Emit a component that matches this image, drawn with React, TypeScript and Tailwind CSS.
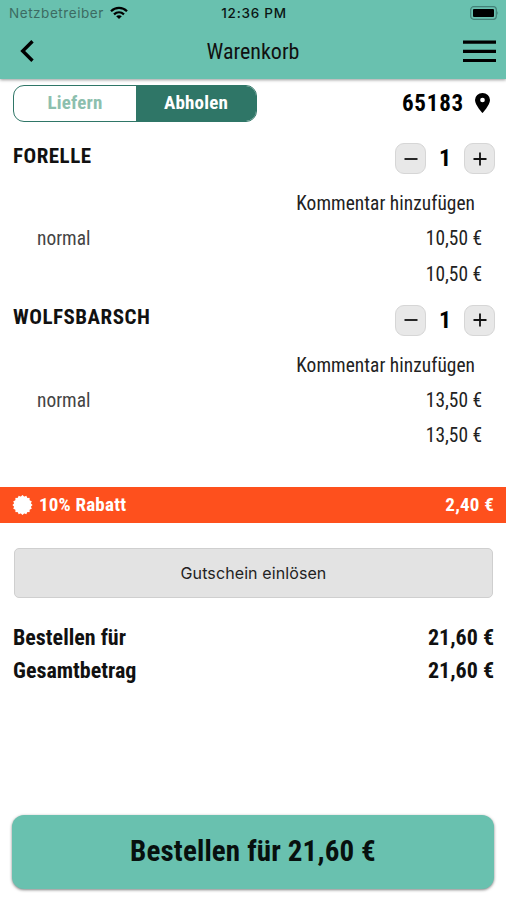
import React from "react";

const items = [
  { name: "FORELLE", price: "10,50 €" },
  { name: "WOLFSBARSCH", price: "13,50 €" },
];

function StepButton({ plus }: { plus?: boolean }) {
  return (
    <button className="flex h-[31px] w-[31px] items-center justify-center rounded-[9px] border border-[#d6d6d6] bg-[#e8e8e8]">
      <svg width="14" height="14" viewBox="0 0 14 14" stroke="#111" strokeWidth="1.8">
        <path d={plus ? "M0.5 7H13.5M7 0.5V13.5" : "M0.5 7H13.5"} />
      </svg>
    </button>
  );
}

function Item({ name, price }: { name: string; price: string }) {
  return (
    <section className="h-[161.5px] pl-[13px] text-[19.4px] text-[#222]">
      <div className="flex h-[44px] items-start justify-between pr-[11px]">
        <h2 className="mt-[0.9px] text-[21px] leading-[24px] font-bold tracking-[0.5px] text-[#111]">{name}</h2>
        <div className="flex items-center">
          <StepButton />
          <span className="w-[38px] text-center text-[24px] leading-[31px] font-bold text-black">1</span>
          <StepButton plus />
        </div>
      </div>
      <div className="flex h-[34px] items-center justify-end pr-[31px] tracking-[0.05px]">Kommentar hinzufügen</div>
      <div className="flex h-[36px] items-center justify-between pr-[24px] pl-[24px]">
        <span className="text-[#444]">normal</span>
        <span>{price}</span>
      </div>
      <div className="flex h-[35px] items-center justify-end pr-[24px]">{price}</div>
    </section>
  );
}

export default function App() {
  return (
    <main className="flex h-[900px] w-[506px] flex-col overflow-hidden bg-white font-['Roboto_Condensed','Roboto',sans-serif] [font-stretch:75%]">
      <header className="h-[79px] shrink-0 bg-[#69c1af] shadow-[0_1px_3px_rgba(0,0,0,0.4)]">
        <div className="grid h-[26px] grid-cols-3 items-center pr-[7px] pl-[9px] font-['Inter',sans-serif] text-[13.5px] [font-stretch:100%]">
          <div className="flex items-center gap-[6px] tracking-[0.55px] text-[#3c6b62]">
            <span className="pt-[1px]">Netzbetreiber</span>
            <svg width="18" height="14" viewBox="0 0 18 14" fill="none" stroke="#000" strokeWidth="2.2">
              <path d="M1 5.2C5.5 0.7 12.5 0.7 17 5.2" />
              <path d="M4 8.4C7 5.6 11 5.6 14 8.4" />
              <path d="M9 13L6.2 10.2C7.8 8.8 10.2 8.8 11.8 10.2Z" fill="#000" stroke="none" />
            </svg>
          </div>
          <span className="pt-[1px] text-center font-medium tracking-[0.75px] text-[#0b1614]">12:36 PM</span>
          <svg className="justify-self-end" width="29" height="14" viewBox="0 0 29 14">
            <rect x="0.7" y="0.7" width="25.6" height="12.6" rx="3" fill="none" stroke="#438177" strokeWidth="1.2" />
            <rect x="3" y="3" width="21" height="8" rx="1" fill="#000" />
            <path d="M27.3 5Q29 7 27.3 9Z" fill="#438177" />
          </svg>
        </div>
        <div className="flex h-[50px] items-center justify-between pr-[10px] pl-[20px]">
          <svg width="23" height="22" viewBox="0 0 23 22" fill="none" stroke="#000" strokeWidth="3.4">
            <path d="M12.5 1.2L2.7 11L12.5 20.8" />
          </svg>
          <h1 className="text-[22px] text-[#111]">Warenkorb</h1>
          <svg width="33" height="23" viewBox="0 0 33 23" stroke="#000" strokeWidth="3.2">
            <path d="M0 2.2H33M0 11.4H33M0 20.5H33" />
          </svg>
        </div>
      </header>
      <div className="mt-[6px] flex h-[37px] shrink-0 items-center justify-between pr-[16px] pl-[13px]">
        <div className="flex h-[37px] w-[244px] overflow-hidden rounded-[11px] border border-[#2f7667] text-[19px] font-bold tracking-[0.2px]">
          <div className="flex w-[122px] items-center justify-center text-[#8dbfae]">Liefern</div>
          <div className="flex flex-1 items-center justify-center bg-[#2f7667] text-white">Abholen</div>
        </div>
        <div className="flex items-center gap-[11px] text-[23px] font-bold tracking-[0.8px]">
          <span className="pt-[2px]">65183</span>
          <svg className="mb-[2px]" width="15" height="20" viewBox="0 0 14 20" preserveAspectRatio="none">
            <path fillRule="evenodd" d="M7 0A7 7 0 0 0 0 7C0 12 7 20 7 20S14 12 14 7A7 7 0 0 0 7 0ZM7 4.8A2.2 2.2 0 1 1 7 9.2A2.2 2.2 0 0 1 7 4.8Z" />
          </svg>
        </div>
      </div>
      <div className="mt-[21px] h-[344px] shrink-0">
        {items.map((item) => (
          <Item key={item.name} {...item} />
        ))}
      </div>
      <div className="flex h-[36px] shrink-0 items-center bg-[#fe501d] pr-[12px] pl-[12px] text-[19px] font-bold tracking-[0.2px] text-white">
        <svg className="mr-[6px] mb-[1px]" width="21" height="20" viewBox="-10.5 -10 21 20" fill="#fff">
          {[0, 22.5, 45, 67.5].map((angle) => (
            <rect key={angle} x="-7.1" y="-7.1" width="14.2" height="14.2" transform={`rotate(${angle})`} />
          ))}
        </svg>
        <span className="flex-1">10% Rabatt</span>
        <span>2,40 €</span>
      </div>
      <button className="mt-[25px] ml-[14px] h-[50px] w-[479px] shrink-0 rounded-[5px] border border-[#cfcfcf] bg-[#e3e3e3] font-['Inter',sans-serif] text-[16px] tracking-[0.1px] text-[#222] [font-stretch:100%]">
        Gutschein einlösen
      </button>
      <div className="mt-[23px] pr-[12px] pl-[13px] text-[22px] leading-[33px] font-bold text-[#111]">
        <div className="flex justify-between"><span>Bestellen für</span><span>21,60 €</span></div>
        <div className="flex justify-between"><span>Gesamtbetrag</span><span>21,60 €</span></div>
      </div>
      <button className="mt-auto mb-[11px] ml-[12px] h-[74px] w-[482px] shrink-0 rounded-[12px] bg-[#69c1af] text-[29px] font-bold tracking-[0.15px] text-[#07100e] shadow-[0_1px_3px_rgba(0,0,0,0.5)]">
        Bestellen für 21,60 €
      </button>
    </main>
  );
}
